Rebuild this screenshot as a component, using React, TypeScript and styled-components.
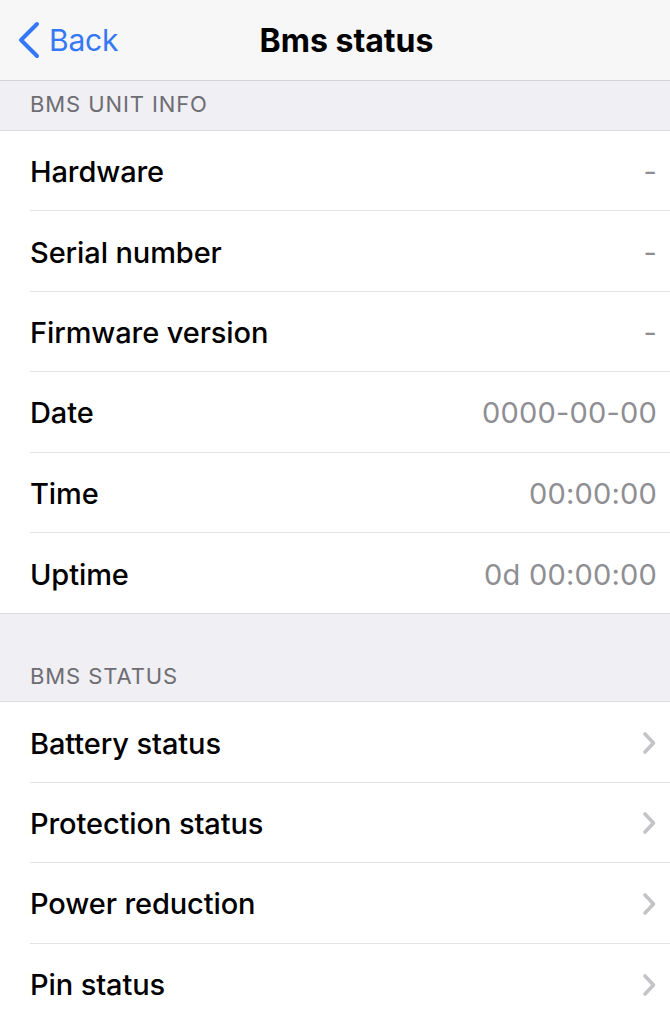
import React from "react";
import styled, { createGlobalStyle } from "styled-components";

const GlobalStyle = createGlobalStyle`
  html, body { margin: 0; padding: 0; background: #ffffff; }
  body { font-family: Inter, "Noto Sans", "Liberation Sans", sans-serif; -webkit-font-smoothing: antialiased; }
  * { box-sizing: border-box; }
`;

const Page = styled.div`
  width: 670px;
  height: 1024px;
  overflow: hidden;
  background: #efeff4;
  display: flex;
  flex-direction: column;
`;

const NavBar = styled.header`
  height: 81px;
  flex: none;
  background: #f7f7f8;
  border-bottom: 1px solid #d4d4d8;
  display: grid;
  grid-template-columns: 1fr auto 1fr;
  align-items: center;
  padding: 0 0 0 17px;
`;

const BackButton = styled.div`
  display: flex;
  align-items: center;
  gap: 8px;
  color: #3478f6;
  font-size: 30px;
  font-weight: 400;
  letter-spacing: -0.2px;
  justify-self: start;
`;

const Title = styled.h1`
  margin: 0 0 0 6px;
  font-size: 32px;
  font-weight: 700;
  color: #000;
  letter-spacing: 0px;
`;

const SectionHeader = styled.div<{ $tall?: boolean }>`
  height: ${(p) => (p.$tall ? "88px" : "50px")};
  flex: none;
  display: flex;
  align-items: flex-end;
  padding: 0 30px ${(p) => (p.$tall ? "12px" : "13px")};
  font-size: 22px;
  font-weight: 400;
  color: #6d6d72;
  letter-spacing: 0.9px;
  border-bottom: 1px solid #dcdce0;
`;

const Group = styled.div`
  background: #ffffff;
  border-bottom: 1px solid #dcdce0;
  padding-left: 30px;
`;

const Row = styled.div<{ $last?: boolean }>`
  height: 80.4px;
  display: flex;
  align-items: center;
  justify-content: space-between;
  padding: 2px 13px 0 0;
  border-bottom: ${(p) => (p.$last ? "none" : "1px solid #e3e3e6")};
`;

const Label = styled.span`
  font-size: 29px;
  font-weight: 500;
  color: #000;
  letter-spacing: -0.1px;
`;

const Value = styled.span`
  font-size: 29px;
  font-weight: 400;
  color: #8e8e93;
  letter-spacing: 0.2px;
`;

const Chevron = () => (
  <svg width="15" height="24" viewBox="0 0 15 24">
    <polyline points="3,3 11.5,12 3,21" fill="none" stroke="#c4c4c8" strokeWidth="3.6" strokeLinecap="round" strokeLinejoin="round" />
  </svg>
);

const BackChevron = () => (
  <svg width="24" height="38" viewBox="0 0 24 38">
    <polyline points="20,3 4,19 20,35" fill="none" stroke="#3478f6" strokeWidth="4" strokeLinecap="round" strokeLinejoin="round" />
  </svg>
);

const info: [string, string][] = [
  ["Hardware", "-"],
  ["Serial number", "-"],
  ["Firmware version", "-"],
  ["Date", "0000-00-00"],
  ["Time", "00:00:00"],
  ["Uptime", "0d 00:00:00"],
];

const status = ["Battery status", "Protection status", "Power reduction", "Pin status"];

export default function App() {
  return (
    <Page>
      <GlobalStyle />
      <NavBar>
        <BackButton>
          <BackChevron />
          Back
        </BackButton>
        <Title>Bms status</Title>
        <div />
      </NavBar>
      <SectionHeader>BMS UNIT INFO</SectionHeader>
      <Group>
        {info.map(([k, v], i) => (
          <Row key={k} $last={i === info.length - 1}>
            <Label>{k}</Label>
            <Value>{v}</Value>
          </Row>
        ))}
      </Group>
      <SectionHeader $tall>BMS STATUS</SectionHeader>
      <Group>
        {status.map((k, i) => (
          <Row key={k} $last={i === status.length - 1}>
            <Label>{k}</Label>
            <Chevron />
          </Row>
        ))}
      </Group>
    </Page>
  );
}
